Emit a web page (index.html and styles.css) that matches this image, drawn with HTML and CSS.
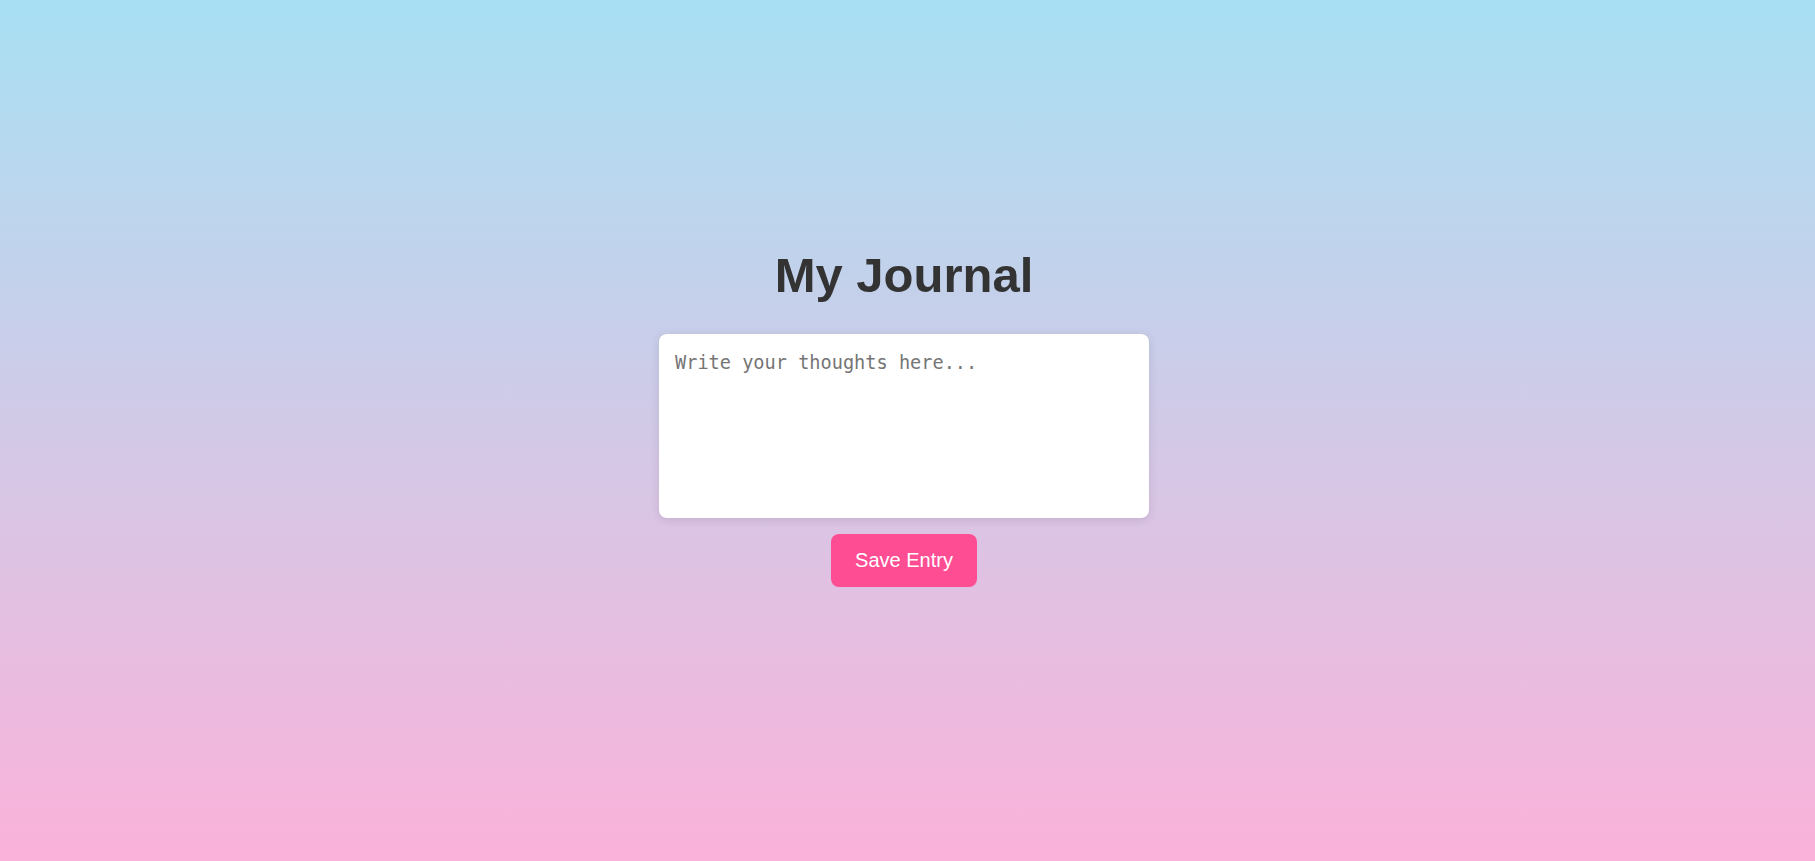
FILE: index.html
```html
<!DOCTYPE html>
<html lang="en">
<head>
<meta charset="utf-8">
<title>My Journal</title>
<link rel="stylesheet" href="styles.css">
</head>
<body>
  <main class="journal">
    <h1 class="journal-title">My Journal</h1>
    <textarea class="journal-entry" placeholder="Write your thoughts here..."></textarea>
    <button class="save-btn" type="button">Save Entry</button>
  </main>
</body>
</html>
```

FILE: styles.css
```css
html, body {
  margin: 0;
  padding: 0;
  height: 100%;
}

body {
  min-height: 100vh;
  background: linear-gradient(to bottom, #a8e0f3, #fbb2da);
  font-family: "Liberation Sans", Arial, sans-serif;
  display: flex;
  justify-content: center;
  align-items: center;
}

.journal {
  display: flex;
  flex-direction: column;
  align-items: center;
  padding-bottom: 27px;
  padding-right: 7px;
}

.journal-title {
  margin: 0 0 31px;
  font-size: 49px;
  font-weight: bold;
  color: #333333;
  line-height: 55px;
}

.journal-entry {
  box-sizing: border-box;
  width: 490px;
  height: 184px;
  padding: 18px 16px 14px;
  border: none;
  border-radius: 8px;
  background: #ffffff;
  box-shadow: 0 2px 10px rgba(0, 0, 0, 0.1);
  font-family: "DejaVu Sans Mono", "Liberation Mono", monospace;
  font-size: 18.6px;
  color: #333;
  resize: none;
  outline: none;
}

.journal-entry::placeholder {
  color: #757575;
}

.save-btn {
  margin-top: 16px;
  padding: 15px 24px;
  border: none;
  border-radius: 8px;
  background: #ff4d94;
  color: #ffffff;
  font-family: "Liberation Sans", Arial, sans-serif;
  font-size: 20px;
  line-height: 23px;
  cursor: pointer;
}
```
